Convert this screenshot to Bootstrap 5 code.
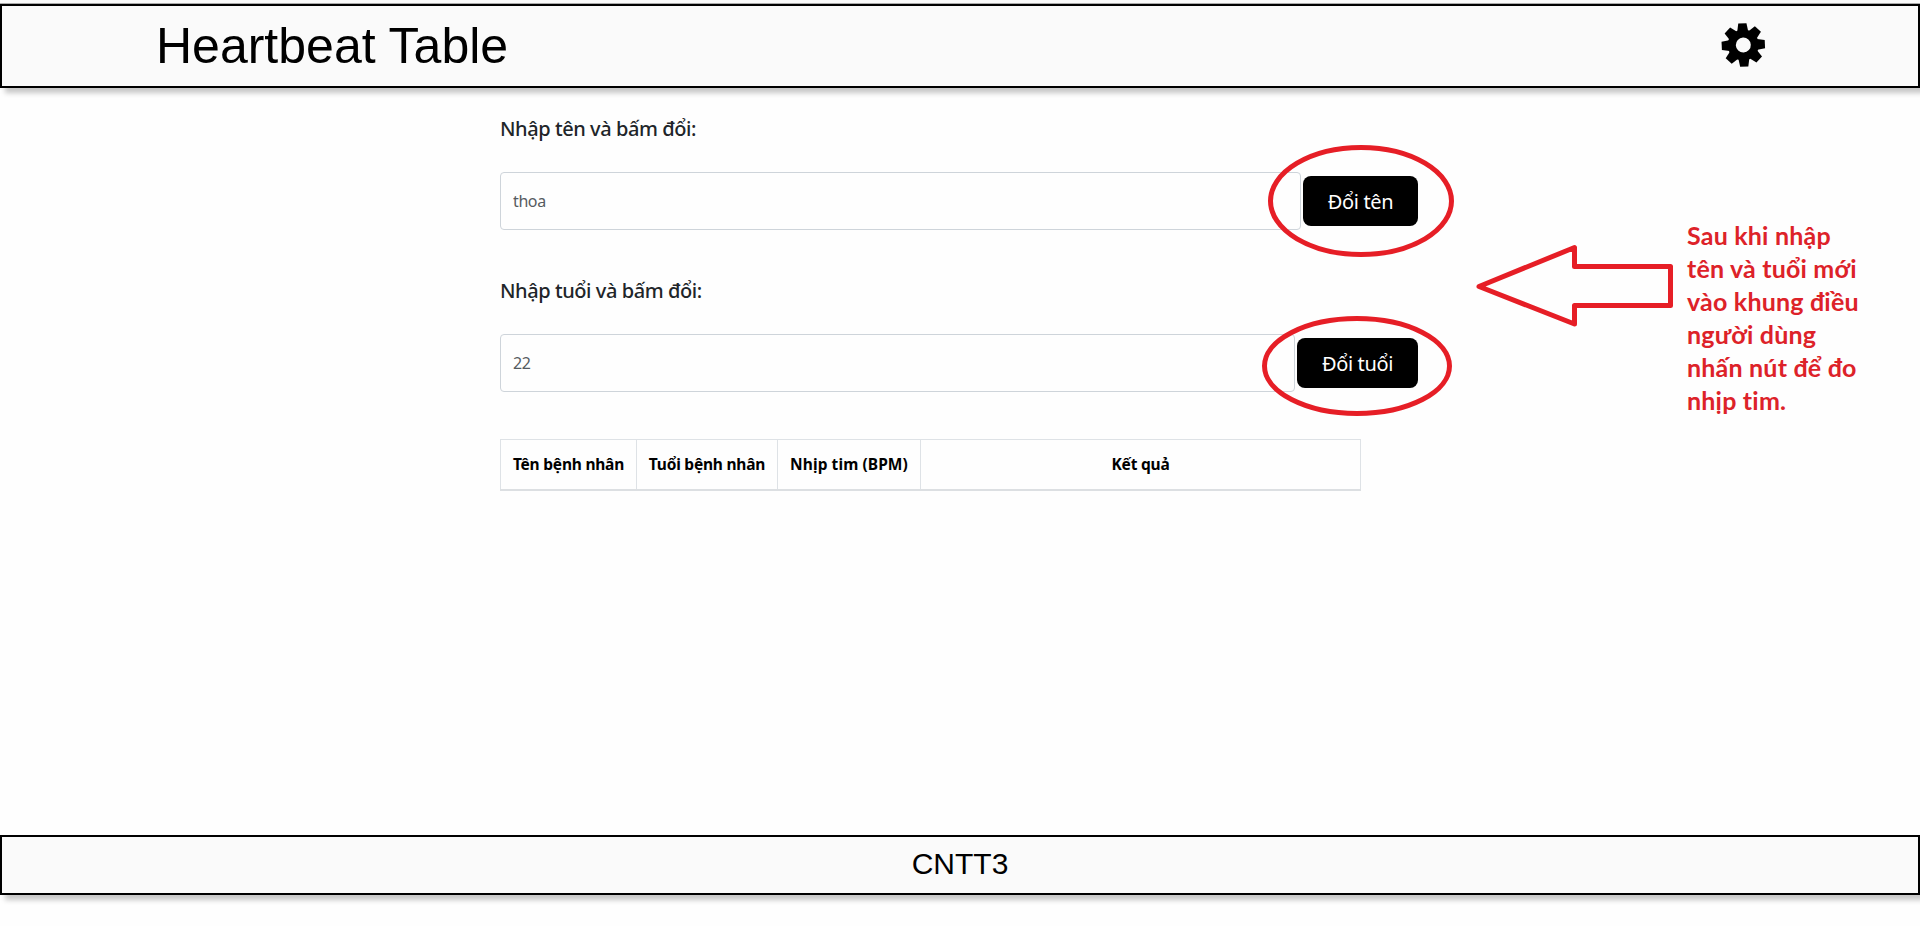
<!DOCTYPE html>
<html lang="vi">
<head>
<meta charset="utf-8">
<meta name="viewport" content="width=device-width, initial-scale=1">
<title>Heartbeat Table</title>
<link href="https://cdn.jsdelivr.net/npm/bootstrap@5.3.0/dist/css/bootstrap.min.css" rel="stylesheet">
<style>
  body { font-family: "Noto Sans", "Open Sans", sans-serif; background: #fefefe; overflow: hidden; }
  .bar { background: #fafafa; border: 2px solid #000; box-shadow: 5px 5px 5px rgba(0, 0, 0, .22); color: #000; font-family: "Liberation Sans", Arial, sans-serif; }
  .top-strip { height: 4px; background: #fafafa; border-bottom: 1px solid #aaa; }
  .top-bar { height: 84px; padding: 0 152px 0 154px; }
  .top-bar h1 { font-size: 50px; line-height: 1; margin: 0; font-weight: 400; }
  .top-bar svg { margin-bottom: 2px; }
  .main-area { height: 747px; }
  .panel { width: 918px; margin-left: 500px; padding-top: 26px; }
  .field-label { font-size: 20px; font-weight: 500; line-height: 30px; letter-spacing: -.43px; color: #212529; margin: 0 0 28px; display: block; }
  .field-row { gap: 2px; height: 58px; margin-bottom: 46px; }
  .field-row .form-control { height: 58px; border: 1px solid #ced4da; border-radius: 4px; padding: 0 12px; font-size: 16px; letter-spacing: -.4px; color: #565b60; background: #fefefe; }
  .btn-swap { background: #000; color: #fff; border: 0; border-radius: 8px; height: 50px; font-size: 20px; letter-spacing: -.36px; padding: 1px 0 0; flex: none; }
  .name-btn { width: 115px; }
  .age-btn { width: 121px; }
  .result-table { width: 861px; table-layout: fixed; border-collapse: collapse; margin: 47px 0 0; }
  .result-table th { height: 50px; border: 1px solid #dee2e6; border-bottom: 2px solid #dcdfe2; text-align: center; vertical-align: middle; font-size: 15.5px; letter-spacing: -.22px; font-weight: 700; color: #000; padding: 1px 0 0; }
  .result-table .bpm-col { letter-spacing: .08px; }
  .marks { position: absolute; inset: 0; pointer-events: none; }
  .note { position: absolute; left: 1687px; top: 219px; width: 200px; color: #dd2229; font: 700 25px/33px Lato, "Noto Sans", sans-serif; letter-spacing: .2px; white-space: nowrap; }
  .bottom-bar { height: 60px; font-size: 30px; line-height: 1; padding-bottom: 2px; }
</style>
</head>
<body class="position-relative vh-100">
  <div class="top-strip"></div>
  <header class="bar top-bar d-flex align-items-center justify-content-between">
    <h1>Heartbeat Table</h1>
    <svg width="46" height="46" viewBox="-23 -23 46 46" aria-label="Cài đặt">
      <g transform="translate(.3 0) rotate(-2.5)">
        <path id="tooth" d="M-5.4-14L-4.1-21.6H4.1L5.4-14z"/>
        <use href="#tooth" transform="rotate(45)"/>
        <use href="#tooth" transform="rotate(90)"/>
        <use href="#tooth" transform="rotate(135)"/>
        <use href="#tooth" transform="rotate(180)"/>
        <use href="#tooth" transform="rotate(225)"/>
        <use href="#tooth" transform="rotate(270)"/>
        <use href="#tooth" transform="rotate(315)"/>
        <circle r="11.5" fill="none" stroke="#000" stroke-width="8"/>
      </g>
    </svg>
  </header>

  <main class="main-area">
    <div class="panel">
      <label class="field-label" for="name">Nhập tên và bấm đổi:</label>
      <div class="field-row d-flex align-items-center">
        <input id="name" class="form-control" type="text" value="thoa">
        <button class="btn btn-swap name-btn" type="button">Đổi tên</button>
      </div>
      <label class="field-label" for="age">Nhập tuổi và bấm đổi:</label>
      <div class="field-row d-flex align-items-center mb-0">
        <input id="age" class="form-control" type="text" value="22">
        <button class="btn btn-swap age-btn" type="button">Đổi tuổi</button>
      </div>
      <table class="result-table">
        <colgroup><col style="width:136px"><col style="width:141px"><col style="width:143px"><col></colgroup>
        <thead>
          <tr><th>Tên bệnh nhân</th><th>Tuổi bệnh nhân</th><th class="bpm-col">Nhịp tim (BPM)</th><th>Kết quả</th></tr>
        </thead>
      </table>
    </div>
  </main>

  <footer class="bar bottom-bar d-flex align-items-center justify-content-center">CNTT3</footer>

  <svg class="marks" width="1920" height="926" fill="none" stroke="#e61e26" stroke-width="5" stroke-linejoin="round">
    <ellipse cx="1361" cy="201" rx="90.5" ry="53.5"/>
    <ellipse cx="1357" cy="366" rx="92.5" ry="47.5"/>
    <path d="M1479 286.5L1574.5 247.5V266.5H1670.5V305.5H1574.5V324z"/>
  </svg>
  <div class="note">Sau khi nhập<br>tên và tuổi mới<br>vào khung điều<br>người dùng<br>nhấn nút để đo<br>nhịp tim.</div>
<script src="https://cdn.jsdelivr.net/npm/bootstrap@5.3.0/dist/js/bootstrap.bundle.min.js"></script>
</body>
</html>
